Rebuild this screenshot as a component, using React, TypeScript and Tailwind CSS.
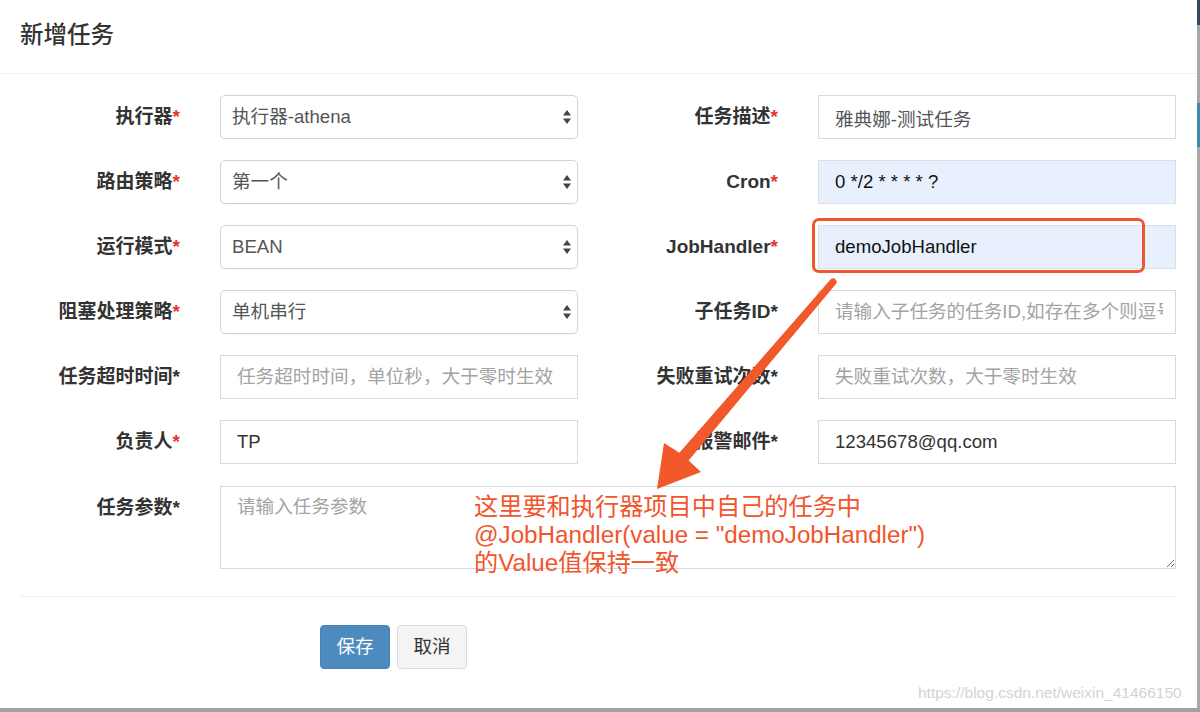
import React from "react";

const FONT = "font-['Liberation_Sans','Noto_Sans_CJK_SC',sans-serif]";

function Arrows() {
  return (
    <svg width="8" height="14" viewBox="0 0 8 14" className="shrink-0">
      <polygon points="4,0 8,5.5 0,5.5" fill="#444" />
      <polygon points="0,8.5 8,8.5 4,14" fill="#444" />
    </svg>
  );
}

function Label({ text, star }: { text: string; star: "red" | "black" }) {
  return (
    <div className="w-[160px] shrink-0 text-right text-[19px] font-bold text-[#333] leading-[44px] whitespace-nowrap">
      {text}
      <span className={star === "red" ? "text-[#e8342f]" : "text-[#333]"}>*</span>
    </div>
  );
}

function Select({ value }: { value: string }) {
  return (
    <div className="ml-10 w-[358px] h-[44px] rounded-[5px] border border-[#d4d4d4] bg-white flex items-center pl-[11px] pr-[6px] shadow-[0_1px_1px_rgba(0,0,0,0.04)]">
      <span className="flex-1 text-[18.6px] text-[#555] leading-[24px]">{value}</span>
      <Arrows />
    </div>
  );
}

function Input({
  value,
  placeholder,
  auto,
  color = "#555",
}: {
  value?: string;
  placeholder?: string;
  auto?: boolean;
  color?: string;
}) {
  return (
    <input
      readOnly
      value={value ?? ""}
      placeholder={placeholder}
      style={{ color }}
      className={
        "ml-10 w-[358px] h-[44px] border pl-4 pr-3 text-[18.6px] outline-none placeholder:text-[#a3a3a3] " +
        (auto ? "bg-[#e8f0fd] border-[#d7dfea]" : "bg-white border-[#d9d9d9]")
      }
    />
  );
}

function Row({ children }: { children: React.ReactNode }) {
  return <div className="flex gap-10">{children}</div>;
}

function Field({ children }: { children: React.ReactNode }) {
  return <div className="flex items-center w-[558px]">{children}</div>;
}

export default function App() {
  return (
    <div className={"relative w-[1200px] h-[712px] overflow-hidden bg-white " + FONT}>
      <div className="flex h-[708px]">
        <div className="flex-1 flex flex-col">
          <div className="h-[74px] border-b border-[#f0f0f0] flex items-center pl-5 pb-[1px] text-[23.5px] font-medium text-[#333]">
            新增任务
          </div>
          <div className="pt-[21px] pl-5 flex flex-col gap-[21px]">
            <Row>
              <Field>
                <Label text="执行器" star="red" />
                <Select value="执行器-athena" />
              </Field>
              <Field>
                <Label text="任务描述" star="red" />
                <Input value="雅典娜-测试任务" color="#555" />
              </Field>
            </Row>
            <Row>
              <Field>
                <Label text="路由策略" star="red" />
                <Select value="第一个" />
              </Field>
              <Field>
                <Label text="Cron" star="red" />
                <Input value="0 */2 * * * * ?" auto color="#111" />
              </Field>
            </Row>
            <Row>
              <Field>
                <Label text="运行模式" star="red" />
                <Select value="BEAN" />
              </Field>
              <Field>
                <Label text="JobHandler" star="red" />
                <Input value="demoJobHandler" auto color="#111" />
              </Field>
            </Row>
            <Row>
              <Field>
                <Label text="阻塞处理策略" star="red" />
                <Select value="单机串行" />
              </Field>
              <Field>
                <Label text="子任务ID" star="black" />
                <Input placeholder="请输入子任务的任务ID,如存在多个则逗号分隔" />
              </Field>
            </Row>
            <Row>
              <Field>
                <Label text="任务超时时间" star="black" />
                <Input placeholder="任务超时时间，单位秒，大于零时生效" />
              </Field>
              <Field>
                <Label text="失败重试次数" star="black" />
                <Input placeholder="失败重试次数，大于零时生效" />
              </Field>
            </Row>
            <Row>
              <Field>
                <Label text="负责人" star="red" />
                <Input value="TP" color="#333" />
              </Field>
              <Field>
                <Label text="报警邮件" star="black" />
                <Input value="12345678@qq.com" color="#333" />
              </Field>
            </Row>
            <div className="flex items-start mt-[1px]">
              <Label text="任务参数" star="black" />
              <textarea
                readOnly
                placeholder="请输入任务参数"
                className="ml-10 w-[956px] h-[83px] border border-[#d9d9d9] bg-white pl-4 pt-[8px] text-[18.6px] leading-[24px] outline-none placeholder:text-[#a3a3a3]"
              />
            </div>
          </div>
          <div className="mx-5 mt-[27px] border-t border-[#eeeeee]" />
          <div className="pl-[320px] mt-[28px] flex gap-[7px]">
            <button className="w-[70px] h-[44px] rounded-[4px] bg-[#4d8bbf] border border-[#4581b3] text-white text-[18.6px]">
              保存
            </button>
            <button className="w-[70px] h-[44px] rounded-[4px] bg-[#f4f4f4] border border-[#dddddd] text-[#333] text-[18.6px]">
              取消
            </button>
          </div>
        </div>
        <div className="w-[3px] flex flex-col">
          <div className="h-[25px] bg-[#34495e]" />
          <div className="h-[78px] bg-[#a8a8a8]" />
          <div className="h-[44px] bg-[#3a8aa8]" />
          <div className="flex-1 bg-[#a8a8a8]" />
        </div>
      </div>
      <div className="h-[4px] bg-[#a1a1a1]" />

      {/* red highlight box */}
      <div className="absolute left-[812px] top-[218px] w-[333px] h-[55px] border-[3px] border-[#f0572a] rounded-[7px] pointer-events-none" />

      {/* arrow */}
      <svg
        className="absolute left-0 top-0 pointer-events-none"
        width="1200"
        height="712"
        viewBox="0 0 1200 712"
      >
        <path
          d="M835.5,284.5 L688.6,460.5 L701,472 L657,489 L664,443 L679.4,452.7 L830.5,279.5 Q833,277 835.5,279.5 Q838,282 835.5,284.5 Z"
          fill="#f1582a"
        />
      </svg>

      {/* annotation */}
      <div className="absolute left-[474px] top-[493px] text-[24.2px] leading-[28px] text-[#f1552c] whitespace-nowrap pointer-events-none">
        <div>这里要和执行器项目中自己的任务中</div>
        <div>@JobHandler(value = "demoJobHandler")</div>
        <div>的Value值保持一致</div>
      </div>

      {/* watermark */}
      <div className="absolute left-[918px] top-[683px] text-[15.5px] leading-[20px] text-[#d3d3d3] font-['Liberation_Sans',sans-serif] whitespace-nowrap pointer-events-none">
        https://blog.csdn.net/weixin_41466150
      </div>
    </div>
  );
}
